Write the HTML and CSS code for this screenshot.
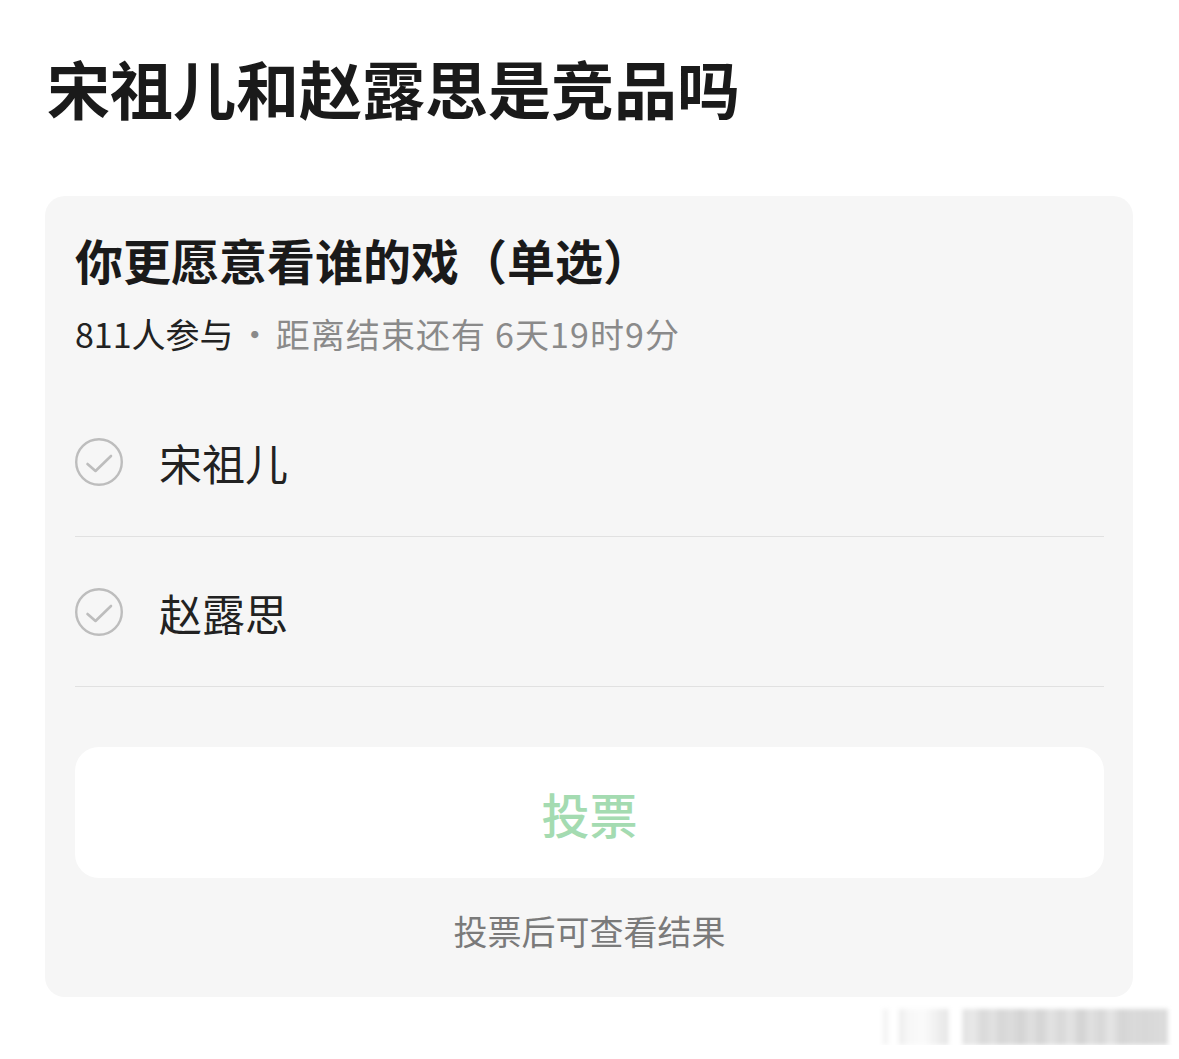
FILE: index.html
```html
<!DOCTYPE html>
<html lang="zh-CN">
<head>
<meta charset="utf-8">
<title>宋祖儿和赵露思是竞品吗</title>
<link rel="stylesheet" href="styles.css">
</head>
<body>
<div class="page">
  <h1 class="title">宋祖儿和赵露思是竞品吗</h1>
  <section class="card">
    <h2 class="question">你更愿意看谁的戏（单选）</h2>
    <p class="meta"><span class="count">811人参与</span><span class="dot">·</span><span class="rest">距离结束还有 6天19时9分</span></p>
    <ul class="options">
      <li class="option">
        <svg class="check" viewBox="0 0 48 48" width="48" height="48"><circle cx="24" cy="24" r="22.8" fill="none" stroke="#bdbdbd" stroke-width="2.4"/><path d="M12.5 26 L20.5 33 L36 18" fill="none" stroke="#bdbdbd" stroke-width="2.6" stroke-linecap="round" stroke-linejoin="round"/></svg>
        <span class="label">宋祖儿</span>
      </li>
      <li class="option">
        <svg class="check" viewBox="0 0 48 48" width="48" height="48"><circle cx="24" cy="24" r="22.8" fill="none" stroke="#bdbdbd" stroke-width="2.4"/><path d="M12.5 26 L20.5 33 L36 18" fill="none" stroke="#bdbdbd" stroke-width="2.6" stroke-linecap="round" stroke-linejoin="round"/></svg>
        <span class="label">赵露思</span>
      </li>
    </ul>
    <div class="vote-btn">投票</div>
    <p class="hint">投票后可查看结果</p>
  </section>
  <div class="wm-row">
    <div class="wm"></div>
  </div>
</div>
</body>
</html>
```

FILE: styles.css
```css
html, body {
  margin: 0;
  padding: 0;
  background: #ffffff;
}
body {
  font-family: "Noto Sans CJK SC", "Noto Sans", sans-serif;
  color: #1b1b1b;
}
.page {
  padding: 50px 46px 0 45px;
}
.title {
  margin: 0;
  padding-left: 2px;
  font-size: 63px;
  line-height: 74px;
  font-weight: 700;
  color: #1a1a1a;
}
.card {
  margin-top: 72px;
  background: #f6f6f6;
  border-radius: 20px;
  padding: 33px 29px 44px 30px;
}
.question {
  margin: 0;
  font-size: 48px;
  line-height: 60px;
  font-weight: 700;
  color: #1a1a1a;
}
.meta {
  margin: 23px 0 0;
  font-size: 34px;
  line-height: 44px;
  font-weight: 400;
}
.count {
  color: #222222;
}
.dot {
  display: inline-block;
  width: 42px;
  text-align: center;
  color: #8a8a8a;
}
.rest {
  color: #8a8a8a;
  letter-spacing: 1.1px;
}
.options {
  list-style: none;
  margin: 31px 0 0;
  padding: 0;
}
.option {
  height: 149px;
  display: flex;
  align-items: center;
  gap: 36px;
  border-bottom: 1px solid #e1e1e1;
}
.check {
  flex: none;
  display: block;
}
.label {
  font-size: 43px;
  line-height: 56px;
  color: #222222;
}
.vote-btn {
  margin-top: 60px;
  height: 131px;
  background: #ffffff;
  border-radius: 24px;
  display: flex;
  align-items: center;
  justify-content: center;
  font-size: 48px;
  font-weight: 500;
  color: #a4dbb1;
}
.hint {
  margin: 31px 0 0;
  text-align: center;
  font-size: 34px;
  line-height: 44px;
  color: #7a7a7a;
}
.wm-row {
  display: flex;
  justify-content: flex-end;
  margin-top: 12px;
  margin-right: -35px;
}
.wm {
  width: 285px;
  height: 36px;
  filter: blur(2px);
  background: linear-gradient(to right,
    #f2f2f2 0px, #f6f6f6 5px, #ffffff 6px, #ffffff 15px, #ececec 17px,
    #f7f7f7 24px, #fbfbfb 40px, #eeeeee 56px, #e6e6e6 64px,
    #ffffff 67px, #ffffff 78px, #e2e2e2 81px, #e9e9e9 90px,
    #d9d9d9 100px, #e2e2e2 110px, #d6d6d6 118px, #dddddd 128px,
    #d3d3d3 138px, #e0e0e0 148px, #d4d4d4 158px, #e3e3e3 168px,
    #d8d8d8 178px, #e4e4e4 188px, #d2d2d2 198px, #e1e1e1 208px,
    #d7d7d7 218px, #e6e6e6 228px, #d5d5d5 238px, #dadada 250px,
    #d8d8d8 262px, #dcdcdc 285px);
}
```
